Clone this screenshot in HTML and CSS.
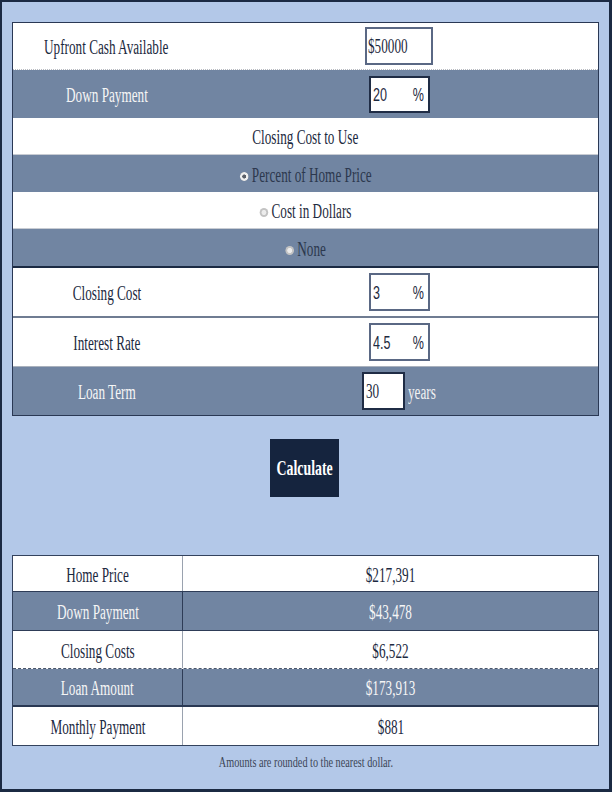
FILE: index.html
```html
<!DOCTYPE html>
<html>
<head>
<meta charset="utf-8">
<link rel="stylesheet" href="styles.css">
</head>
<body>
<div class="page">
  <div class="form">
    <div class="row white row-first">
      <div class="cell-label"><span class="sq">Upfront Cash Available</span></div>
      <div class="cell-field">
        <div class="box box-cash"><span class="val">$50000</span></div>
      </div>
    </div>
    <div class="row slate row-tall">
      <div class="cell-label"><span class="sq">Down Payment</span></div>
      <div class="cell-field">
        <div class="box box-pct"><span class="val sans">20</span><span class="val unit sans">%</span></div>
      </div>
    </div>
    <div class="row white row-short row-full line-light"><span class="sq">Closing Cost to Use</span></div>
    <div class="row slate row-short row-full opt"><span class="sq"><span class="radio on"></span>Percent of Home Price</span></div>
    <div class="row white row-short row-full opt line-light"><span class="sq"><span class="radio"></span>Cost in Dollars</span></div>
    <div class="row slate row-short row-full opt line-navy"><span class="sq"><span class="radio"></span>None</span></div>
    <div class="row white row-cc">
      <div class="cell-label"><span class="sq">Closing Cost</span></div>
      <div class="cell-field">
        <div class="box box-pct"><span class="val sans">3</span><span class="val unit sans">%</span></div>
      </div>
    </div>
    <div class="row white row-ir">
      <div class="cell-label"><span class="sq">Interest Rate</span></div>
      <div class="cell-field">
        <div class="box box-pct"><span class="val sans">4.5</span><span class="val unit sans">%</span></div>
      </div>
    </div>
    <div class="row slate row-tall">
      <div class="cell-label"><span class="sq">Loan Term</span></div>
      <div class="cell-field term">
        <div class="box box-term"><span class="val">30</span></div>
        <span class="years">years</span>
      </div>
    </div>
  </div>

  <button class="calc" type="button"><span class="sq">Calculate</span></button>

  <div class="results">
    <div class="rrow white r1">
      <div class="rlabel"><span class="sq">Home Price</span></div>
      <div class="rvalue"><span class="sq">$217,391</span></div>
    </div>
    <div class="rrow slate r2">
      <div class="rlabel"><span class="sq">Down Payment</span></div>
      <div class="rvalue"><span class="sq">$43,478</span></div>
    </div>
    <div class="rrow white r3">
      <div class="rlabel"><span class="sq">Closing Costs</span></div>
      <div class="rvalue"><span class="sq">$6,522</span></div>
    </div>
    <div class="rrow slate r4">
      <div class="rlabel"><span class="sq">Loan Amount</span></div>
      <div class="rvalue"><span class="sq">$173,913</span></div>
    </div>
    <div class="rrow white r5">
      <div class="rlabel"><span class="sq">Monthly Payment</span></div>
      <div class="rvalue"><span class="sq">$881</span></div>
    </div>
  </div>

  <p class="note"><span class="sq">Amounts are rounded to the nearest dollar.</span></p>
</div>
</body>
</html>
```

FILE: styles.css
```css
* {
  box-sizing: border-box;
  margin: 0;
  padding: 0;
}

html, body {
  width: 612px;
  height: 792px;
  overflow: hidden;
}

body {
  font-family: "Liberation Serif", "Times New Roman", serif;
  color: #1c2940;
  background: #b3c8e8;
}

.page {
  height: 792px;
  border: 2px solid #1b2a43;
  border-right-width: 3px;
  border-bottom-width: 3px;
  background: #b3c8e8;
  padding: 20px 10px 0 10px;
}

.sq {
  display: inline-block;
  white-space: nowrap;
  flex-shrink: 0;
  transform: scaleX(0.66);
  transform-origin: center center;
}

/* ---------- form table ---------- */
.form {
  border: 1px solid #2a3854;
  background: #fff;
}

.row {
  display: flex;
  font-size: 20px;
}

.white {
  background: #fff;
  color: #1c2940;
}

.slate {
  background: #7185a2;
  color: #f6f6f6;
}

.row-first {
  height: 47px;
  border-bottom: 1px dotted #b9bcc2;
}

.row-tall {
  height: 48px;
}

.row-short {
  height: 37px;
}

.row-full {
  align-items: center;
  justify-content: center;
  padding-top: 3px;
}

.line-light {
  border-bottom: 1px solid #c8ccd3;
}

.line-navy {
  height: 39px;
  border-bottom: 2px solid #1b2a43;
}

.row-cc {
  height: 50px;
  border-bottom: 2px solid #6f7c92;
}

.row-ir {
  height: 49px;
  border-bottom: 1px solid #a9b1bd;
}

.opt {
  color: #2c384e;
}

.opt.white {
  color: #1f2b40;
}

.radio {
  display: inline-block;
  width: 13px;
  height: 9px;
  margin-right: 5px;
  border-radius: 50%;
  vertical-align: 1px;
  background: radial-gradient(ellipse at center, #ececec 0 35%, #c3c3c3 45% 100%);
}

.radio.on {
  background: radial-gradient(ellipse at center, #5a5f68 0 28%, #f0f0f0 36% 62%, #b5b5b5 72% 100%);
}

.cell-label {
  width: 187px;
  display: flex;
  align-items: center;
  justify-content: center;
  padding-top: 2px;
}

.cell-field {
  flex: 1;
  display: flex;
  align-items: center;
  justify-content: center;
}

.box {
  background: #fff;
  border: 2px solid #5a6884;
  height: 38px;
  display: flex;
  align-items: center;
  justify-content: space-between;
  color: #1e2a40;
  font-size: 20px;
}

.slate .box {
  border-color: #1f2c45;
}

.box-cash {
  width: 68px;
  padding: 1px 0 0 1px;
}

.box-pct {
  width: 61px;
  padding: 1px 4px 0 2px;
}

.row-tall .box-pct {
  height: 37px;
}

.box-term {
  width: 43px;
  padding: 1px 0 0 2px;
}

.val {
  display: inline-block;
  white-space: nowrap;
  transform: scaleX(0.66);
  transform-origin: left center;
}

.sans {
  font-family: "Liberation Sans", Arial, sans-serif;
  font-size: 19px;
}

.unit {
  transform-origin: right center;
}

.years {
  display: inline-block;
  white-space: nowrap;
  margin-left: 3px;
  margin-right: -14px;
  padding-top: 2px;
  transform: scaleX(0.66);
  transform-origin: left center;
  color: #f2f2f2;
}

/* ---------- button ---------- */
.calc {
  display: flex;
  align-items: center;
  justify-content: center;
  width: 69px;
  height: 58px;
  margin: 23px auto 0;
  position: relative;
  left: -1px;
  border: 0;
  background: #15243e;
  color: #ffffff;
  font-family: "Liberation Serif", "Times New Roman", serif;
  font-weight: bold;
  font-size: 21px;
  overflow: visible;
}

/* ---------- results ---------- */
.results {
  margin-top: 58px;
  border: 1px solid #33425d;
  background: #fff;
}

.rrow {
  display: flex;
  font-size: 20px;
  border-bottom: 1px solid #2e3c57;
}

.r1 { height: 36px; }
.r2 { height: 39px; }
.r3 { height: 38px; border-bottom: 1px dashed #4a566b; }
.r4 { height: 38px; border-bottom: 2px solid #2a3853; }
.r5 { height: 38px; border-bottom: 0; }

.rlabel {
  width: 170px;
  border-right: 1px solid #9aa2af;
  display: flex;
  align-items: center;
  justify-content: center;
  padding-top: 3px;
}

.slate .rlabel {
  border-right-color: #2e3c57;
}

.rvalue {
  flex: 1;
  display: flex;
  align-items: center;
  justify-content: center;
  padding-top: 3px;
}

/* ---------- note ---------- */
.note {
  margin-top: 7px;
  height: 18px;
  display: flex;
  align-items: center;
  justify-content: center;
  font-size: 15.5px;
  color: #3b4556;
}
```
